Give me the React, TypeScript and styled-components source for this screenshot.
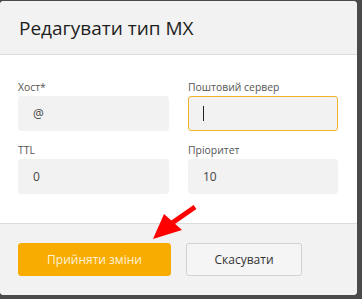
import styled, { createGlobalStyle } from 'styled-components';

const GlobalStyle = createGlobalStyle`
  html, body {
    margin: 0;
    padding: 0;
    background: #4b4b4b;
    font-family: 'Open Sans', 'Noto Sans', sans-serif;
  }
`;

const Backdrop = styled.div`
  width: 362px;
  height: 299px;
  padding-top: 1px;
  box-sizing: border-box;
  position: relative;
  overflow: hidden;
`;

const Modal = styled.div`
  width: 357px;
  height: 294px;
  background: #fff;
  border-radius: 4px;
  overflow: hidden;
  display: flex;
  flex-direction: column;
`;

const Header = styled.div`
  height: 53px;
  background: #f2f2f2;
  border-bottom: 1px solid #dcdcdc;
  display: flex;
  align-items: center;
  padding: 0 19px;

  h2 {
    margin: 0;
    font-size: 19px;
    font-weight: 400;
    color: #1e1e1e;
  }
`;

const Body = styled.div`
  padding: 24px 19px 29px 18px;
  display: grid;
  grid-template-columns: 151px 150px;
  column-gap: 19px;
  row-gap: 11px;
`;

const Field = styled.div`
  display: flex;
  flex-direction: column;
`;

const Label = styled.label`
  font-size: 10.4px;
  line-height: 16px;
  color: #555;
  margin-bottom: 1px;
`;

const Input = styled.div<{ $focused?: boolean }>`
  height: 35px;
  box-sizing: border-box;
  background: #f2f2f2;
  border-radius: 3px;
  border: 1px solid ${(p) => (p.$focused ? '#f0b429' : '#f2f2f2')};
  display: flex;
  align-items: center;
  padding-left: 14px;
  font-size: 12px;
  color: #444;
`;

const Caret = styled.span`
  width: 1px;
  height: 15px;
  background: #222;
`;

const Footer = styled.div`
  flex: 1;
  background: #f2f2f2;
  border-top: 1px solid #dcdcdc;
  display: flex;
  align-items: flex-start;
  gap: 15px;
  padding: 19px 18px 0;
`;

const Button = styled.button<{ $primary?: boolean }>`
  height: 33px;
  width: ${(p) => (p.$primary ? '153px' : '116px')};
  border-radius: 3px;
  font-family: inherit;
  font-size: 12px;
  cursor: pointer;
  border: 1px solid ${(p) => (p.$primary ? '#f8ab00' : '#d2d2d2')};
  background: ${(p) => (p.$primary ? '#f8ab00' : '#f5f5f5')};
  color: ${(p) => (p.$primary ? '#fff3d6' : '#333')};
`;

const Arrow = styled.svg`
  position: absolute;
  left: 148px;
  top: 200px;
`;

export default function App() {
  return (
    <>
      <GlobalStyle />
      <Backdrop>
        <Modal>
          <Header>
            <h2>Редагувати тип MX</h2>
          </Header>
          <Body>
            <Field>
              <Label>Хост*</Label>
              <Input>@</Input>
            </Field>
            <Field>
              <Label>Поштовий сервер</Label>
              <Input $focused>
                <Caret />
              </Input>
            </Field>
            <Field>
              <Label>TTL</Label>
              <Input>0</Input>
            </Field>
            <Field>
              <Label>Пріоритет</Label>
              <Input>10</Input>
            </Field>
          </Body>
          <Footer>
            <Button $primary>Прийняти зміни</Button>
            <Button>Скасувати</Button>
          </Footer>
        </Modal>
        <Arrow width="60" height="45" viewBox="0 0 60 45">
          <line x1="47" y1="7" x2="24" y2="23" stroke="#f00" strokeWidth="5" />
          <polygon points="5,39 16,14 34,30" fill="#f00" />
        </Arrow>
      </Backdrop>
    </>
  );
}
